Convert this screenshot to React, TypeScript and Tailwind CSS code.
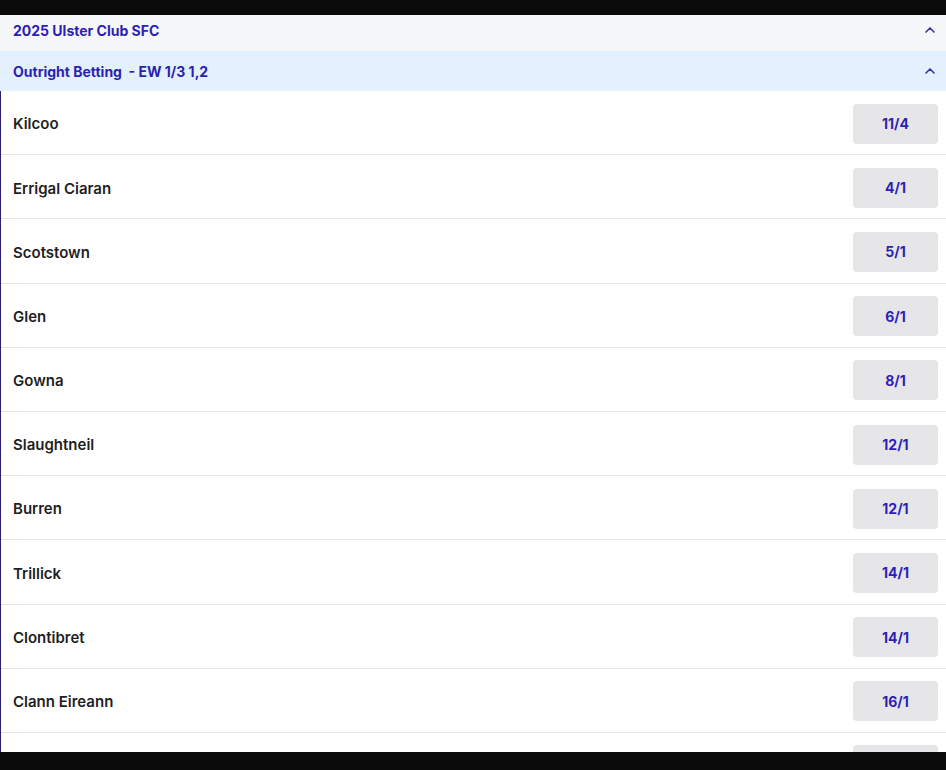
import React from "react";

const rows: [string, string][] = [
  ["Kilcoo", "11/4"],
  ["Errigal Ciaran", "4/1"],
  ["Scotstown", "5/1"],
  ["Glen", "6/1"],
  ["Gowna", "8/1"],
  ["Slaughtneil", "12/1"],
  ["Burren", "12/1"],
  ["Trillick", "14/1"],
  ["Clontibret", "14/1"],
  ["Clann Eireann", "16/1"],
  ["", ""],
];

const Chev = () => (
  <svg width="16" height="16" viewBox="0 0 24 24" fill="none" stroke="#3b2fb0" strokeWidth="2.5" strokeLinecap="round" strokeLinejoin="round">
    <path d="M6 15l6-6 6 6" />
  </svg>
);

export default function App() {
  return (
    <div className="w-[946px] h-[770px] bg-[#0b0b0b] overflow-hidden relative" style={{ fontFamily: "Inter, sans-serif" }}>
      <div className="mt-[15px] h-[737px] overflow-hidden bg-white">
        <div className="h-[36px] bg-[#f6f7f9] flex items-center justify-between pl-[13px] pr-[8px] pb-[6px]">
          <span className="text-[14px] font-bold text-[#2d1fb4]">2025 Ulster Club SFC</span>
          <Chev />
        </div>
        <div className="h-[40px] bg-[#e2f1fd] flex items-center justify-between pl-[13px] pr-[8px]">
          <span className="text-[14px] font-bold text-[#2d1fb4] whitespace-pre">Outright Betting  - EW 1/3 1,2</span>
          <Chev />
        </div>
        <div className="border-l border-[#2a1f6e]">
          {rows.map(([n, o], i) => (
            <div key={i} className="h-[64.2px] flex items-center justify-between pl-[12px] pr-[8px] border-b border-[#e6e6e8]">
              <span className="text-[15px] font-semibold text-[#1f1f23] pt-[4px]">{n}</span>
              <div className="w-[85px] h-[40px] mt-[2px] rounded-[4px] bg-[#e6e6e8] flex items-center justify-center text-[14px] font-bold text-[#2d1fb4]">{o}</div>
            </div>
          ))}
        </div>
      </div>
    </div>
  );
}
